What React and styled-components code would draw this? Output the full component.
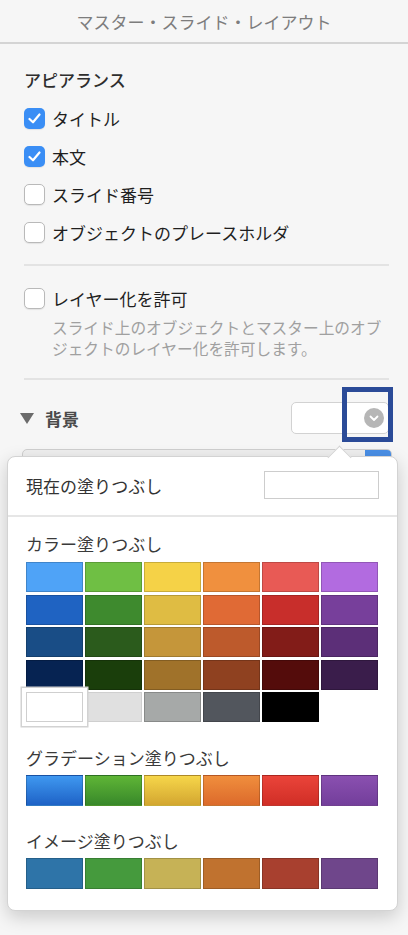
import styled, { createGlobalStyle } from "styled-components";

const GlobalStyle = createGlobalStyle`
  body {
    margin: 0;
    background: #f6f6f6;
    font-family: "Noto Sans CJK JP", "Noto Sans", sans-serif;
  }
  #root {
    height: 935px;
    overflow: hidden;
  }
`;

const Page = styled.div`
  width: 408px;
  height: 935px;
  background: #f6f6f6;
`;

const Header = styled.div`
  height: 42px;
  border-bottom: 2px solid #d4d4d4;
  display: flex;
  align-items: center;
  justify-content: center;
  font-size: 17px;
  color: #7d7d7d;
`;

const Section = styled.div`
  padding: 0 19px 0 24px;
`;

const Heading = styled.div`
  margin-top: 24px;
  height: 24px;
  line-height: 24px;
  font-size: 17px;
  font-weight: 500;
  color: #2e2e2e;
`;

const Row = styled.label`
  height: 38px;
  display: flex;
  align-items: center;
  gap: 7px;
  font-size: 17px;
  color: #1f1f1f;
  margin-top: ${(p) => p.$top || 0}px;
`;

const Box = styled.span`
  width: 21px;
  height: 21px;
  box-sizing: border-box;
  border-radius: 5px;
  display: flex;
  align-items: center;
  justify-content: center;
  flex-shrink: 0;
  background: ${(p) => (p.$checked ? "#3a8ef5" : "#fff")};
  border: ${(p) => (p.$checked ? "none" : "1.5px solid #b9b9b9")};
  box-shadow: 0 1px 1px rgba(0, 0, 0, 0.08);
`;

const Divider = styled.div`
  height: 2px;
  background: #e3e3e3;
  margin-top: ${(p) => p.$top}px;
`;

const Desc = styled.div`
  padding-left: 28px;
  font-size: 15.7px;
  line-height: 21px;
  color: #a0a0a0;
`;

const BgRow = styled.div`
  margin-top: 22px;
  height: 32px;
  display: flex;
  align-items: center;
  justify-content: space-between;
  margin-left: -4px;
`;

const BgLabel = styled.div`
  display: flex;
  align-items: center;
  gap: 11px;
  font-size: 17px;
  font-weight: 700;
  color: #4a4a4a;
`;

const Triangle = styled.span`
  width: 0;
  height: 0;
  border-left: 7px solid transparent;
  border-right: 7px solid transparent;
  border-top: 11px solid #6b6b6b;
`;

const Select = styled.div`
  position: relative;
  width: 98px;
  height: 32px;
  box-sizing: border-box;
  background: #fff;
  border: 1px solid #d2d2d2;
  border-radius: 5px;
  display: flex;
  align-items: center;
  justify-content: flex-end;
  padding-right: 4px;
`;

const Chevron = styled.span`
  width: 20px;
  height: 20px;
  border-radius: 50%;
  background: #b6b6b6;
  display: flex;
  align-items: center;
  justify-content: center;
`;

const Highlight = styled.div`
  position: absolute;
  left: 50px;
  top: -16px;
  width: 51px;
  height: 55px;
  box-sizing: border-box;
  border: 5px solid #2b4b98;
`;

const Lower = styled.div`
  position: relative;
  margin: 15px 16px 0 22px;
`;

const Field = styled.div`
  height: 30px;
  border: 1px solid #cfcfcf;
  border-radius: 5px;
  background: #efefef;
  position: relative;
  overflow: hidden;
  &::after {
    content: "";
    position: absolute;
    right: 0;
    top: 0;
    width: 26px;
    height: 100%;
    background: #4a8fe6;
  }
`;

const Popover = styled.div`
  position: absolute;
  top: 7px;
  left: -15px;
  width: 391px;
  box-sizing: border-box;
  background: #fff;
  border: 1px solid #d3d3d3;
  border-radius: 8px;
  box-shadow: 0 6px 18px rgba(0, 0, 0, 0.18);
  padding-bottom: 21px;
  &::before {
    content: "";
    position: absolute;
    left: 323px;
    top: -8px;
    width: 16px;
    height: 16px;
    background: #fff;
    border-left: 1px solid #d3d3d3;
    border-top: 1px solid #d3d3d3;
    transform: rotate(45deg);
  }
`;

const CurrentRow = styled.div`
  position: relative;
  display: flex;
  align-items: center;
  justify-content: space-between;
  padding: 14px 18px 16px 18px;
  font-size: 17px;
  color: #333;
`;

const CurrentBox = styled.div`
  width: 115px;
  height: 28px;
  box-sizing: border-box;
  border: 1px solid #cdcdcd;
  background: #fff;
`;

const PopDivider = styled.div`
  height: 2px;
  background: #e6e6e6;
`;

const Group = styled.div`
  padding: 0 19px 0 18px;
`;

const GroupLabel = styled.div`
  margin-top: ${(p) => p.$top}px;
  height: 24px;
  line-height: 24px;
  font-size: 17px;
  color: #3a3a3a;
  margin-bottom: ${(p) => p.$gap}px;
`;

const Grid = styled.div`
  display: grid;
  grid-template-columns: repeat(6, 1fr);
  column-gap: 2px;
  row-gap: 2.5px;
  grid-auto-rows: ${(p) => p.$h}px;
`;

const Swatch = styled.div`
  position: relative;
  box-sizing: border-box;
  background: ${(p) => p.$bg};
  border: 1px solid
    ${(p) => (p.$light ? "#cfcfcf" : "rgba(0, 0, 0, 0.18)")};
  ${(p) =>
    p.$selected &&
    `
    z-index: 1;
    box-shadow: 0 0 0 4px #fff, 0 0 0 5.5px #d2d2d2;
  `}
`;

const colors = [
  ["#4fa3f7", "#6fbf44", "#f5d247", "#f0903e", "#e85a55", "#b26be0"],
  ["#1f63c2", "#3e8a2e", "#dfbc43", "#e06a35", "#c82e2b", "#773f9b"],
  ["#194d86", "#2b5b1c", "#c5963a", "#bd5a2c", "#821c18", "#5c2f78"],
  ["#062352", "#1a3e0b", "#a0722a", "#8f4120", "#540c0b", "#3a1d4b"],
  ["#ffffff", "#e0e0e0", "#a6a9a8", "#52565d", "#000000", null],
];

const gradients = [
  "linear-gradient(#3f98f0, #1e62c6)",
  "linear-gradient(#5fb536, #38882a)",
  "linear-gradient(#f6d64a, #d3a630)",
  "linear-gradient(#f08e3d, #dc6a2b)",
  "linear-gradient(#ea443a, #d02e26)",
  "linear-gradient(#8a50b0, #733e9b)",
];

const images = ["#2e74a8", "#459a3d", "#c6b256", "#c0722f", "#a8402f", "#6f468b"];

const Check = () => (
  <svg width="13" height="11" viewBox="0 0 13 11">
    <polyline
      points="1.5,6 5,9.3 11.5,1.5"
      fill="none"
      stroke="#fff"
      strokeWidth="2.2"
      strokeLinecap="round"
      strokeLinejoin="round"
    />
  </svg>
);

const CheckRow = ({ checked, children, top }) => (
  <Row $top={top}>
    <Box $checked={checked}>{checked && <Check />}</Box>
    {children}
  </Row>
);

const App = () => {
  return (
    <Page>
      <GlobalStyle />
      <Header>マスター・スライド・レイアウト</Header>
      <Section>
        <Heading>アピアランス</Heading>
        <CheckRow checked top={7}>
          タイトル
        </CheckRow>
        <CheckRow checked>本文</CheckRow>
        <CheckRow>スライド番号</CheckRow>
        <CheckRow>オブジェクトのプレースホルダ</CheckRow>
        <Divider $top={13} />
        <CheckRow top={13}>レイヤー化を許可</CheckRow>
        <Desc>
          スライド上のオブジェクトとマスター上のオブジェクトのレイヤー化を許可します。
        </Desc>
        <Divider $top={19} />
        <BgRow>
          <BgLabel>
            <Triangle />
            背景
          </BgLabel>
          <Select>
            <Chevron>
              <svg width="10" height="7" viewBox="0 0 10 7">
                <polyline
                  points="1.5,1.5 5,5 8.5,1.5"
                  fill="none"
                  stroke="#fff"
                  strokeWidth="1.8"
                  strokeLinecap="round"
                  strokeLinejoin="round"
                />
              </svg>
            </Chevron>
            <Highlight />
          </Select>
        </BgRow>
      </Section>
      <Lower>
        <Field />
        <Popover>
          <CurrentRow>
            現在の塗りつぶし
            <CurrentBox />
          </CurrentRow>
          <PopDivider />
          <Group>
            <GroupLabel $top={15} $gap={6}>
              カラー塗りつぶし
            </GroupLabel>
            <Grid $h={30}>
              {colors.flat().map((c, i) =>
                c ? (
                  <Swatch
                    key={i}
                    $bg={c}
                    $light={c === "#ffffff" || c === "#e0e0e0"}
                    $selected={i === 24}
                  />
                ) : (
                  <div key={i} />
                )
              )}
            </Grid>
            <GroupLabel $top={24} $gap={5}>
              グラデーション塗りつぶし
            </GroupLabel>
            <Grid $h={31}>
              {gradients.map((g, i) => (
                <Swatch key={i} $bg={g} />
              ))}
            </Grid>
            <GroupLabel $top={23} $gap={5}>
              イメージ塗りつぶし
            </GroupLabel>
            <Grid $h={31}>
              {images.map((c, i) => (
                <Swatch key={i} $bg={c} />
              ))}
            </Grid>
          </Group>
        </Popover>
      </Lower>
    </Page>
  );
};

export default App;
